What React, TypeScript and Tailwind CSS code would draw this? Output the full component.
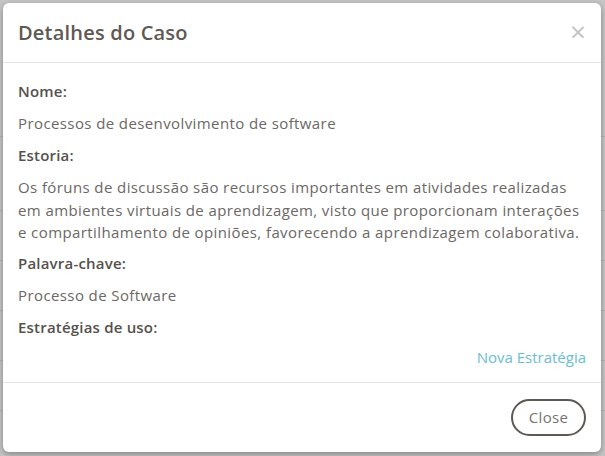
import React from "react";

export default function App() {
  const font = { fontFamily: '"Open Sans", "Noto Sans", sans-serif' };
  return (
    <div className="relative w-[605px] h-[456px] overflow-hidden bg-[#c6c6c6]" style={font}>
      {/* dimmed page behind */}
      <div className="absolute inset-0 flex flex-col">
        <div className="h-[137px] border-b border-[#b4b4b4]" />
        <div className="h-[74px] border-b border-[#b4b4b4]" />
        <div className="h-[50px] border-b border-[#b4b4b4]" />
        <div className="h-[50px] border-b border-[#b4b4b4]" />
        <div className="h-[50px] border-b border-[#b4b4b4]" />
        <div className="h-[50px] border-b border-[#b4b4b4]" />
      </div>
      <div className="absolute left-[3px] top-[3px] w-[598px] h-[449px] bg-white rounded-[6px] shadow-[0_2px_6px_rgba(0,0,0,0.35)] flex flex-col">
        <div className="h-[60px] flex items-center justify-between pl-[15px] pr-[15px] border-b border-[#e5e5e5]">
          <h4 className="text-[20px] font-semibold text-[#5e5954] tracking-[0.2px]">Detalhes do Caso</h4>
          <span className="text-[28px] leading-none text-[#c4c4c4] -mt-[3px]">×</span>
        </div>
        <div className="flex flex-col pl-[15px] pr-[15px] pt-[15px] text-[15px] text-[#6b6865] tracking-[0.4px]">
          <div className="h-[27px] leading-[27px] font-semibold text-[#55514d] tracking-[0.2px]">Nome:</div>
          <div className="mt-[5px] h-[27px] leading-[27px]">Processos de desenvolvimento de software</div>
          <div className="mt-[5px] h-[27px] leading-[27px] font-semibold text-[#55514d] tracking-[0.2px]">Estoria:</div>
          <div className="mt-[5px] leading-[22.5px] py-[2px]">
            Os fóruns de discussão são recursos importantes em atividades realizadas em ambientes virtuais de aprendizagem, visto que proporcionam interações e compartilhamento de opiniões, favorecendo a aprendizagem colaborativa.
          </div>
          <div className="mt-[4px] h-[27px] leading-[27px] font-semibold text-[#55514d] tracking-[0.2px]">Palavra-chave:</div>
          <div className="mt-[5px] h-[27px] leading-[27px]">Processo de Software</div>
          <div className="mt-[5px] h-[27px] leading-[27px] font-semibold text-[#55514d] tracking-[0.2px]">Estratégias de uso:</div>
          <div className="h-[28px] leading-[28px] text-right text-[#6bbdd3] mt-[2px] tracking-[0px]">Nova Estratégia</div>
        </div>
        <div className="mt-auto h-[70px] border-t border-[#e5e5e5] flex items-center justify-end pr-[15px]">
          <button className="w-[75px] h-[37px] rounded-full border-2 border-[#5e5954] text-[15px] text-[#77736f] bg-white tracking-[0.3px]">Close</button>
        </div>
      </div>
    </div>
  );
}
